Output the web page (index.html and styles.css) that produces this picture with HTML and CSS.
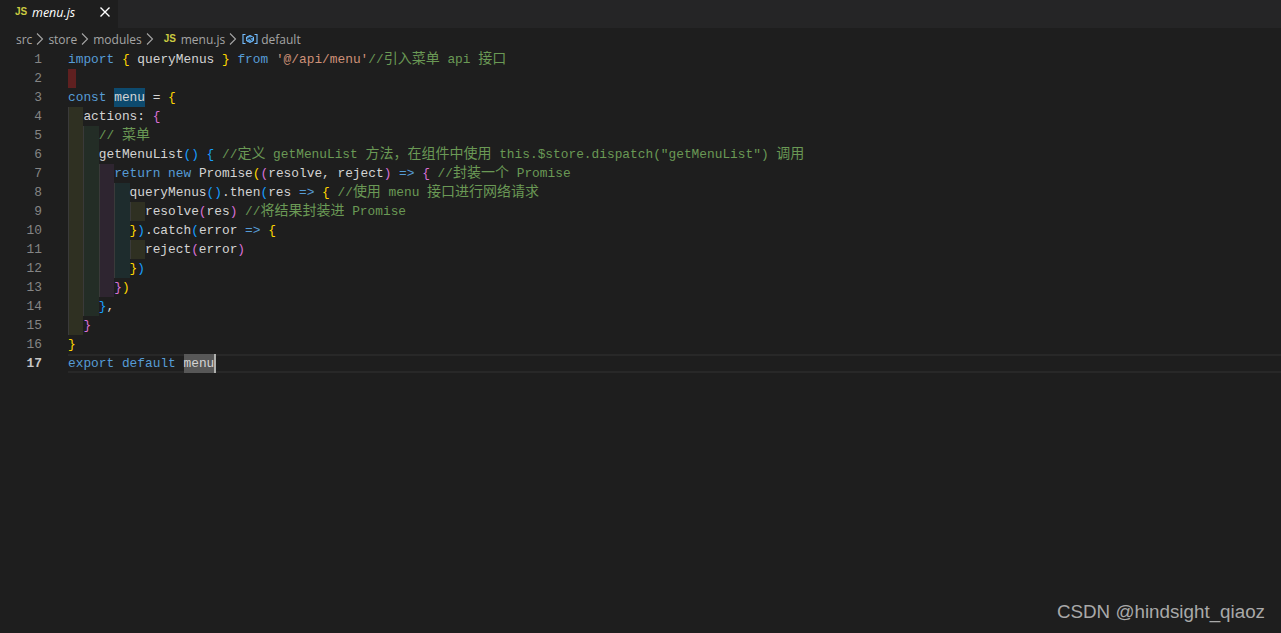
FILE: index.html
```html
<!DOCTYPE html>
<html lang="zh-CN">
<head>
<meta charset="utf-8">
<title>menu.js</title>
<link rel="stylesheet" href="styles.css">
</head>
<body>
<div class="tabbar">
  <div class="tab">
    <span class="js js-tab">JS</span>
    <span class="tab-name">menu.js</span>
    <svg class="tab-close" width="16" height="16" viewBox="0 0 16 16"><path d="M3.5 3.5l9 9M12.5 3.5l-9 9" stroke="#fff" stroke-width="1.4" fill="none"/></svg>
  </div>
</div>
<nav class="crumbs">
  <span>src</span>
  <svg class="chev" width="16" height="16" viewBox="0 0 16 16"><path d="M5 2.5L10.5 8 5 13.5" /></svg>
  <span>store</span>
  <svg class="chev" width="16" height="16" viewBox="0 0 16 16"><path d="M5 2.5L10.5 8 5 13.5" /></svg>
  <span>modules</span>
  <svg class="chev" width="16" height="16" viewBox="0 0 16 16"><path d="M5 2.5L10.5 8 5 13.5" /></svg>
  <span class="js js-crumb">JS</span>
  <span>menu.js</span>
  <svg class="chev" width="16" height="16" viewBox="0 0 16 16"><path d="M5 2.5L10.5 8 5 13.5" /></svg>
  <svg class="sym" width="16" height="16" viewBox="0 0 16 16"><path class="br" d="M3.5 3.5H1v9h2.5M12.5 3.5H15v9h-2.5"/><path class="cube" d="M8 4.5l3.5 1.6v3.6L8 11.5 4.5 9.7V6.1z"/><path class="cube-line" d="M4.8 8.4L11 6M7 6.2l2.6 3.4"/></svg>
  <span>default</span>
</nav>
<main class="editor">
  <div class="line"><span class="num">1</span><code class="code"><i class="k">import</i> <i class="g">{</i> queryMenus <i class="g">}</i> <i class="k">from</i> <i class="s">'@/api/menu'</i><i class="c">//<b>引入菜单</b> api <b>接口</b></i></code></div>
  <div class="line"><span class="num">2</span><code class="code"><span class="err"></span></code></div>
  <div class="line"><span class="num">3</span><code class="code"><i class="k">const</i> <span class="hl-write">menu</span> = <i class="g">{</i></code></div>
  <div class="line"><span class="num">4</span><span class="ind i1"></span><code class="code">actions: <i class="p">{</i></code></div>
  <div class="line"><span class="num">5</span><span class="ind i1"></span><span class="ind i2"></span><code class="code"><i class="c">// <b>菜单</b></i></code></div>
  <div class="line"><span class="num">6</span><span class="ind i1"></span><span class="ind i2"></span><code class="code">getMenuList<i class="b">()</i> <i class="b">{</i> <i class="c">//<b>定义</b> getMenuList <b>方法，在组件中使用</b> this.$store.dispatch("getMenuList") <b>调用</b></i></code></div>
  <div class="line"><span class="num">7</span><span class="ind i1"></span><span class="ind i2"></span><span class="ind i3"></span><code class="code"><i class="k">return</i> <i class="k">new</i> Promise<i class="g">(</i><i class="p">(</i>resolve, reject<i class="p">)</i> <i class="k">=&gt;</i> <i class="p">{</i> <i class="c">//<b>封装一个</b> Promise</i></code></div>
  <div class="line"><span class="num">8</span><span class="ind i1"></span><span class="ind i2"></span><span class="ind i3"></span><span class="ind i4"></span><code class="code">queryMenus<i class="b">()</i>.then<i class="b">(</i>res <i class="k">=&gt;</i> <i class="g">{</i> <i class="c">//<b>使用</b> menu <b>接口进行网络请求</b></i></code></div>
  <div class="line"><span class="num">9</span><span class="ind i1"></span><span class="ind i2"></span><span class="ind i3"></span><span class="ind i4"></span><span class="ind i1"></span><code class="code">resolve<i class="p">(</i>res<i class="p">)</i> <i class="c">//<b>将结果封装进</b> Promise</i></code></div>
  <div class="line"><span class="num">10</span><span class="ind i1"></span><span class="ind i2"></span><span class="ind i3"></span><span class="ind i4"></span><code class="code"><i class="g">}</i><i class="b">)</i>.catch<i class="b">(</i>error <i class="k">=&gt;</i> <i class="g">{</i></code></div>
  <div class="line"><span class="num">11</span><span class="ind i1"></span><span class="ind i2"></span><span class="ind i3"></span><span class="ind i4"></span><span class="ind i1"></span><code class="code">reject<i class="p">(</i>error<i class="p">)</i></code></div>
  <div class="line"><span class="num">12</span><span class="ind i1"></span><span class="ind i2"></span><span class="ind i3"></span><span class="ind i4"></span><code class="code"><i class="g">}</i><i class="b">)</i></code></div>
  <div class="line"><span class="num">13</span><span class="ind i1"></span><span class="ind i2"></span><span class="ind i3"></span><code class="code"><i class="p">}</i><i class="g">)</i></code></div>
  <div class="line"><span class="num">14</span><span class="ind i1"></span><span class="ind i2"></span><code class="code"><i class="b">}</i>,</code></div>
  <div class="line"><span class="num">15</span><span class="ind i1"></span><code class="code"><i class="p">}</i></code></div>
  <div class="line"><span class="num">16</span><code class="code"><i class="g">}</i></code></div>
  <div class="line"><span class="num active">17</span><code class="code current"><i class="k">export</i> <i class="k">default</i> <span class="hl-read">menu</span><span class="cursor"></span></code></div>
</main>
<div class="watermark">CSDN @hindsight_qiaoz</div>
</body>
</html>
```
FILE: styles.css
```css
html, body {
  margin: 0;
  height: 100%;
  overflow: hidden;
  background: #1e1e1e;
}
body {
  font-family: "Open Sans", "Noto Sans CJK SC", sans-serif;
  color: #d4d4d4;
}
.tabbar {
  height: 28px;
  background: #252526;
  display: flex;
}
.tab {
  width: 118px;
  background: #1e1e1e;
  display: flex;
  align-items: center;
  box-sizing: border-box;
  padding: 0 5px 4px 15px;
}
.js {
  color: #cbcb41;
  font: bold 10px/1 "Liberation Sans", sans-serif;
}
.js-tab { width: 17px; }
.tab-name {
  font-size: 12.5px;
  font-style: italic;
  color: #fff;
  flex: 1;
}
.tab-close { flex: none; }
.crumbs {
  height: 22px;
  display: flex;
  align-items: center;
  padding-left: 16px;
  font-size: 12px;
  color: #a5a5a5;
}
.chev { flex: none; }
.chev path { fill: none; stroke: #a5a5a5; stroke-width: 1.1; }
.js-crumb { margin: 0 5px 0 6px; width: 12px; }
.sym { flex: none; margin: 0 3px 0 1px; }
.br { fill: none; stroke: #75beff; stroke-width: 1.1; }
.cube { fill: #4a8fc9; stroke: #75beff; stroke-width: 1; }
.cube-line { fill: none; stroke: #1e1e1e; stroke-width: 1; }
.editor {
  font-size: 12.83px;
}
.line {
  display: flex;
  height: 19px;
  line-height: 19px;
}
.num {
  flex: none;
  width: 42px;
  margin-right: 26px;
  text-align: right;
  color: #858585;
  font-family: "Liberation Mono", monospace;
}
.num.active {
  color: #c6c6c6;
  font-weight: bold;
}
.code {
  flex: 1;
  font-family: "Liberation Mono", "Noto Sans CJK SC", monospace;
  font-size: 12.83px;
  white-space: pre;
  color: #d4d4d4;
}
.code i { font-style: normal; }
.code b {
  font-family: "Noto Sans CJK SC", sans-serif;
  font-weight: 400;
  font-size: 14px;
  line-height: 1;
}
.k { color: #569cd6; }
.s { color: #ce9178; }
.c { color: #6a9955; }
.g { color: #ffd700; }
.p { color: #da70d6; }
.b { color: #179fff; }
.ind {
  flex: none;
  width: 15.4px;
  box-sizing: border-box;
  border-left: 1px solid #3a3a3a;
}
.i1 { background: #2f3022; }
.i2 { background: #232d26; }
.i3 { background: #2e2530; }
.i4 { background: #1e2c2d; }
.err {
  display: inline-block;
  width: 7.7px;
  height: 19px;
  vertical-align: top;
  background: #5f2020;
}
.hl-write {
  display: inline-block;
  height: 19px;
  vertical-align: top;
  background: #0d4a6e;
}
.hl-read {
  display: inline-block;
  height: 19px;
  vertical-align: top;
  background: #575757;
}
.current {
  box-shadow: inset 0 2px #282828, inset 0 -2px #282828;
}
.cursor {
  display: inline-block;
  width: 2px;
  height: 19px;
  vertical-align: top;
  background: #aeafad;
}
.watermark {
  position: absolute;
  right: 16px;
  bottom: 8px;
  font: 18.8px/26px "Liberation Sans", sans-serif;
  color: #a9a9a9;
}
```
